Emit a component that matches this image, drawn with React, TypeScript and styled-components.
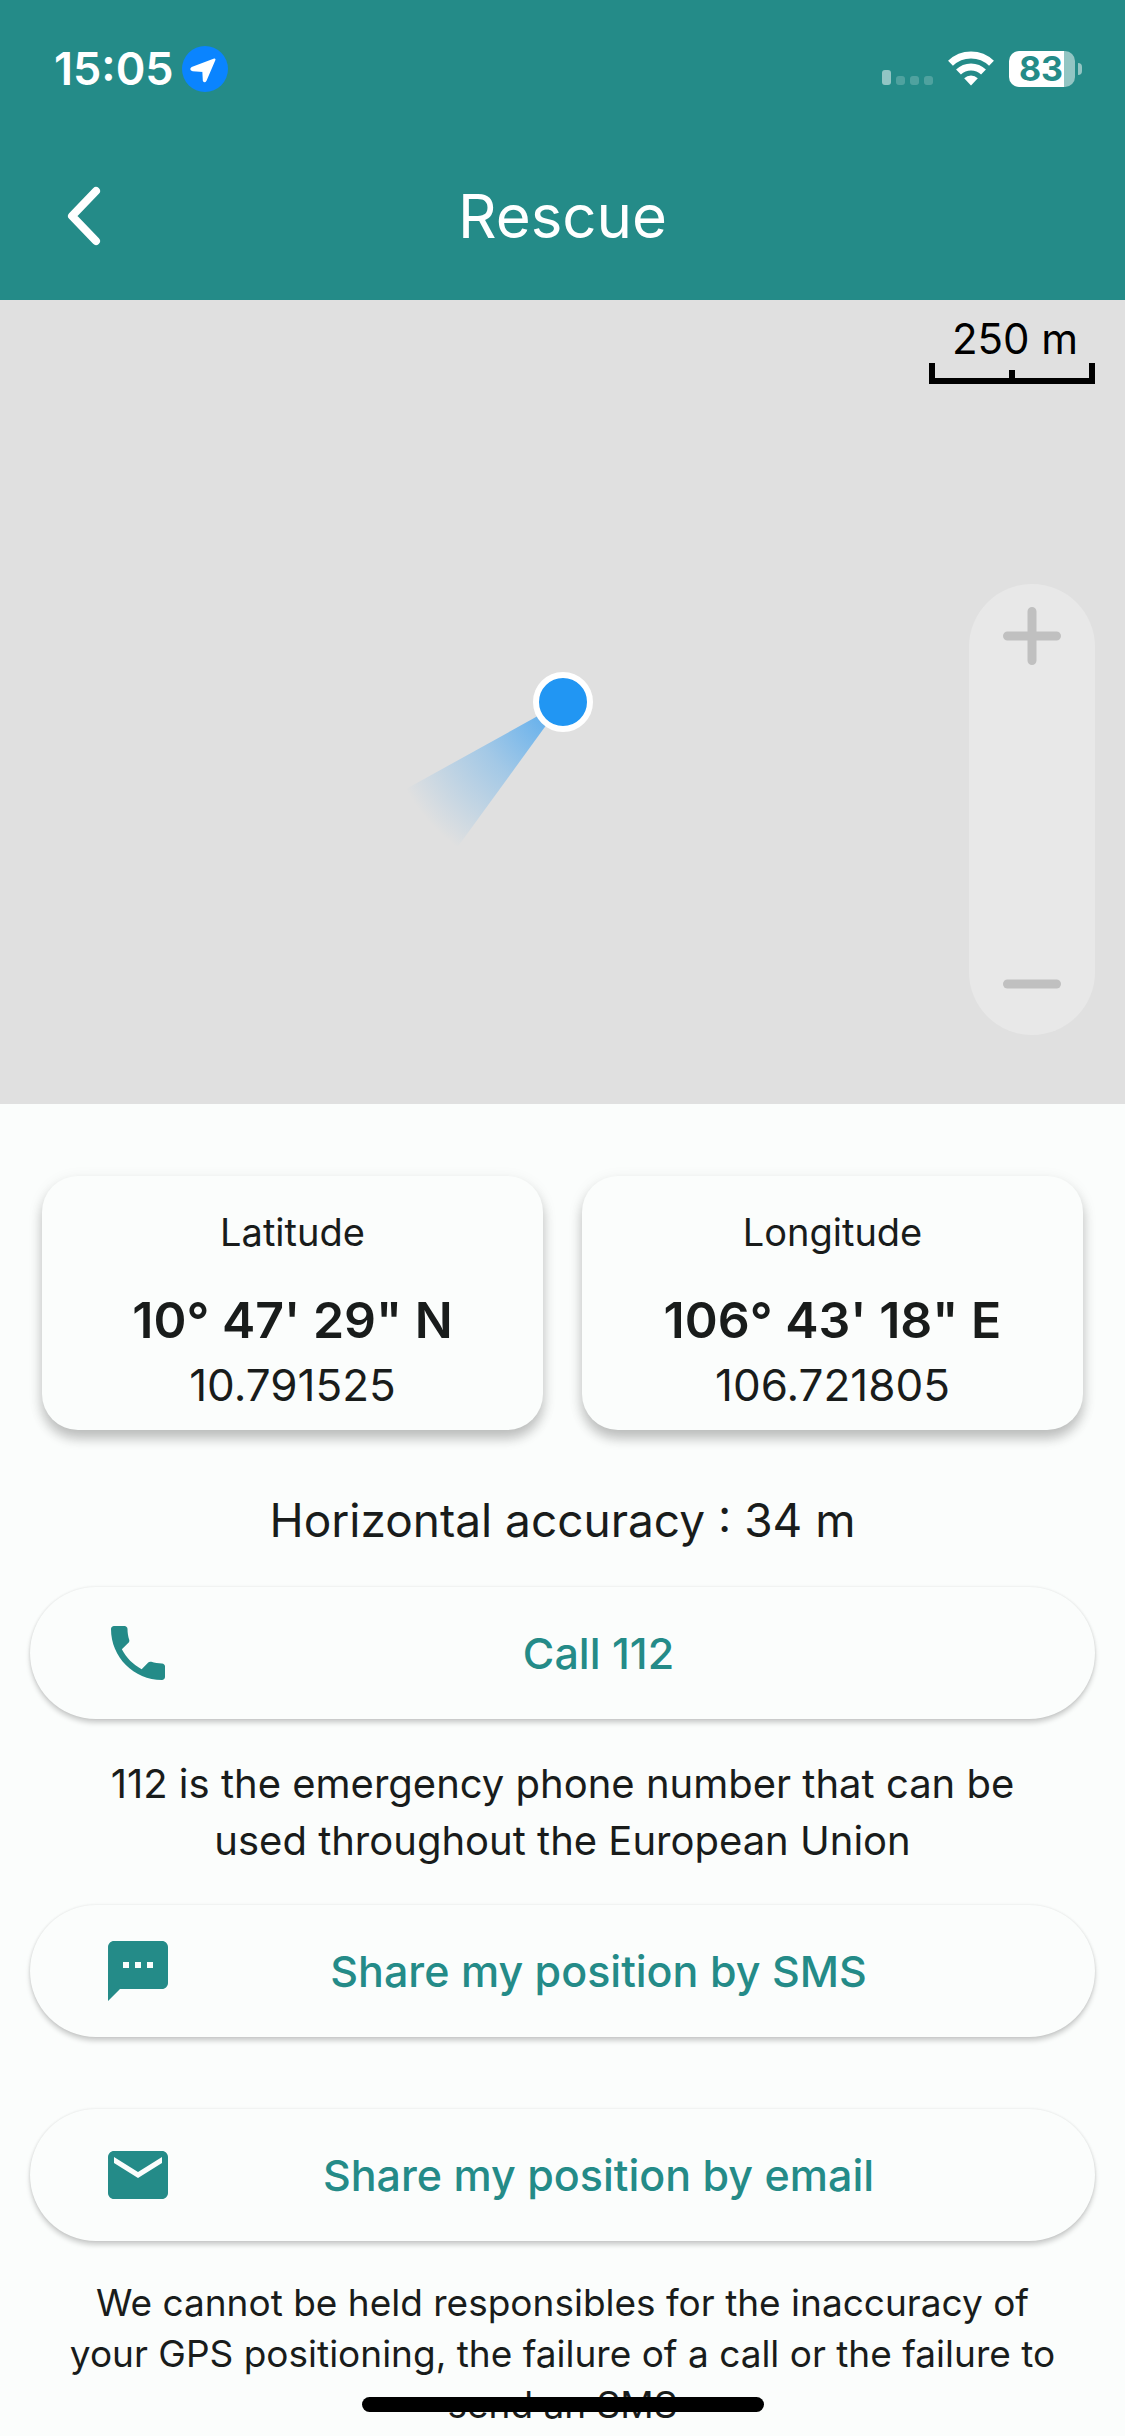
import React from "react";
import styled, { createGlobalStyle } from "styled-components";
import { MdEmail, MdPhone, MdSms } from "react-icons/md";

const teal = "#248b88";
const surface = "#fbfdfc";
const ink = "#191c1b";

const GlobalStyle = createGlobalStyle`
  * { box-sizing: border-box; }
  body {
    margin: 0;
    background: ${surface};
    color: ${ink};
    font-family: Inter, Roboto, "Liberation Sans", sans-serif;
  }
  button { font: inherit; border: 0; cursor: pointer; }
  h1, h2, p { margin: 0; font-weight: 400; }
`;

const Page = styled.div`
  display: flex;
  flex-direction: column;
  min-height: 100vh;
`;

const Header = styled.header`
  background: ${teal};
  color: #fff;
`;

const StatusBar = styled.div`
  display: flex;
  align-items: center;
  justify-content: space-between;
  height: 138px;
  padding: 0 43px 0 54px;
`;

const StatusGroup = styled.div`
  display: flex;
  align-items: center;
  gap: 8px;
`;

const Clock = styled.time`
  font-size: 45px;
  line-height: 60px;
  font-weight: 600;
`;

const Indicators = styled.div`
  display: flex;
  align-items: center;
  gap: 15px;
`;

const Battery = styled.div`
  display: flex;
  align-items: center;
  gap: 3px;
`;

const BatteryBody = styled.div`
  width: 66px;
  height: 36px;
  padding-right: 2px;
  border-radius: 10px;
  background: linear-gradient(to right, #fff 83%, #92c5c3 83%);
  color: ${teal};
  font-size: 34px;
  line-height: 36px;
  font-weight: 700;
  text-align: center;
`;

const BatteryTip = styled.div`
  width: 4px;
  height: 12px;
  border-radius: 0 6px 6px 0;
  background: #92c5c3;
`;

const NavBar = styled.div`
  display: grid;
  grid-template-columns: 168px 1fr 168px;
  align-items: center;
  height: 162px;
  padding-bottom: 6px;
`;

const BackButton = styled.button`
  display: grid;
  place-items: center;
  height: 120px;
  padding: 0;
  background: none;
  color: #fff;
`;

const Title = styled.h1`
  font-size: 60px;
  line-height: 72px;
  text-align: center;
`;

const MapView = styled.section`
  display: flex;
  flex-direction: column;
  align-items: flex-end;
  position: relative;
  height: 804px;
  padding: 15px 30px 0;
  background: #e0e0e0;
  overflow: hidden;
`;

const Scale = styled.div`
  display: flex;
  flex-direction: column;
  align-items: center;
  width: 166px;
  color: #000;
`;

const ScaleLabel = styled.span`
  padding-left: 6px;
  font-size: 42px;
  line-height: 48px;
`;

const Marker = styled.svg`
  position: absolute;
  top: 50%;
  left: 50%;
  transform: translate(-50%, -50%);
`;

const ZoomControl = styled.div`
  display: flex;
  flex-direction: column;
  justify-content: space-between;
  width: 126px;
  height: 451px;
  margin-top: 200px;
  border-radius: 63px;
  background: #e8e8e8;
`;

const ZoomButton = styled.button`
  display: grid;
  place-items: center;
  height: 103px;
  padding: 0;
  background: none;
  color: #c0c0c0;
`;

const Content = styled.main`
  display: flex;
  flex-direction: column;
  padding: 72px 30px 0;
`;

const Cards = styled.div`
  display: grid;
  grid-template-columns: 1fr 1fr;
  gap: 39px;
  padding: 0 12px;
`;

const Card = styled.section`
  display: flex;
  flex-direction: column;
  align-items: center;
  padding: 26px 0 16px;
  border-radius: 36px;
  background: ${surface};
  box-shadow: 0 9px 12px rgba(0, 0, 0, 0.2), 0 4px 16px rgba(0, 0, 0, 0.09);
`;

const CardLabel = styled.h2`
  font-size: 38px;
  line-height: 60px;
`;

const Coordinate = styled.p`
  margin-top: 22px;
  font-size: 50px;
  line-height: 72px;
  font-weight: 600;
`;

const Decimal = styled.p`
  font-size: 44px;
  line-height: 58px;
`;

const Accuracy = styled.p`
  margin: 60px 0 37px;
  font-size: 46px;
  line-height: 60px;
  text-align: center;
`;

const ActionButton = styled.button`
  display: flex;
  align-items: center;
  height: 132px;
  padding: 0 72px;
  border-radius: 66px;
  background: ${surface};
  color: ${teal};
  box-shadow: 0 4px 5px rgba(0, 0, 0, 0.18), 0 0 3px rgba(0, 0, 0, 0.1);
`;

const ActionLabel = styled.span`
  flex: 1;
  font-size: 43px;
  line-height: 60px;
  font-weight: 500;
  text-align: center;
`;

const Actions = styled.div`
  display: flex;
  flex-direction: column;
  gap: 72px;
`;

const Hint = styled.p`
  margin: 36px 60px;
  font-size: 40px;
  line-height: 57px;
  text-align: center;
`;

const Disclaimer = styled.p`
  margin: 36px 30px 0;
  font-size: 37px;
  line-height: 51px;
  text-align: center;
`;

const HomeIndicator = styled.div`
  position: fixed;
  bottom: 24px;
  left: 50%;
  width: 402px;
  height: 15px;
  border-radius: 8px;
  background: #000;
  transform: translateX(-50%);
`;

const LocationIcon = () => (
  <svg width="46" height="46" viewBox="0 0 46 46" aria-hidden="true">
    <circle cx="23" cy="23" r="23" fill="#0a84ff" />
    <path
      d="M32.5 13.5 23.5 34.5Q22.6 36 21.8 34.5L21.3 25 10.6 24.2Q8.4 23.2 10 22Z"
      fill="#fff"
      stroke="#fff"
      strokeWidth="2"
      strokeLinejoin="round"
    />
  </svg>
);

const SignalIcon = () => (
  <svg width="51" height="36" viewBox="0 0 51 36" fill="#fff" aria-hidden="true">
    <rect x="0" y="19" width="9" height="15" rx="3" opacity="0.5" />
    <rect x="14" y="25" width="9" height="9" rx="3" opacity="0.2" />
    <rect x="28" y="25" width="9" height="9" rx="3" opacity="0.2" />
    <rect x="42" y="25" width="9" height="9" rx="3" opacity="0.2" />
  </svg>
);

const WifiIcon = () => (
  <svg width="46" height="36" viewBox="0 0 46 36" aria-hidden="true">
    <g fill="none" stroke="#fff" strokeWidth="7">
      <path d="M2.5 12.2A29.5 29.5 0 0 1 43.5 12.2" />
      <path d="M10.5 21A18 18 0 0 1 35.5 21" />
    </g>
    <path d="M16.2 27.2A9.8 9.8 0 0 1 29.8 27.2L23 34.5Z" fill="#fff" />
  </svg>
);

const ChevronIcon = () => (
  <svg width="36" height="60" viewBox="0 0 36 60" aria-hidden="true">
    <path
      d="M30 5 6 30 30 55"
      fill="none"
      stroke="#fff"
      strokeWidth="8"
      strokeLinecap="round"
      strokeLinejoin="round"
    />
  </svg>
);

const ScaleRuler = () => (
  <svg width="166" height="21" viewBox="0 0 166 21" aria-hidden="true">
    <path d="M3 0V18H163V0M83 7V18" fill="none" stroke="#000" strokeWidth="6" />
  </svg>
);

const ZoomGlyph = ({ plus = false }: { plus?: boolean }) => (
  <svg width="58" height="58" viewBox="0 0 58 58" aria-hidden="true">
    <path
      d={plus ? "M4.5 29H53.5M29 4.5V53.5" : "M4.5 29H53.5"}
      fill="none"
      stroke="currentColor"
      strokeWidth="9"
      strokeLinecap="round"
    />
  </svg>
);

const positions = [
  { label: "Latitude", dms: `10° 47' 29" N`, decimal: "10.791525" },
  { label: "Longitude", dms: `106° 43' 18" E`, decimal: "106.721805" },
];

export default function App() {
  return (
    <>
      <GlobalStyle />
      <Page>
        <Header>
          <StatusBar>
            <StatusGroup>
              <Clock>15:05</Clock>
              <LocationIcon />
            </StatusGroup>
            <Indicators>
              <SignalIcon />
              <WifiIcon />
              <Battery>
                <BatteryBody>83</BatteryBody>
                <BatteryTip />
              </Battery>
            </Indicators>
          </StatusBar>
          <NavBar>
            <BackButton aria-label="Back">
              <ChevronIcon />
            </BackButton>
            <Title>Rescue</Title>
          </NavBar>
        </Header>

        <MapView aria-label="Map">
          <Scale>
            <ScaleLabel>250 m</ScaleLabel>
            <ScaleRuler />
          </Scale>
          <Marker width="360" height="360" viewBox="-180 -180 360 360" aria-hidden="true">
            <defs>
              <radialGradient id="heading" gradientUnits="userSpaceOnUse" cx="0" cy="0" r="180">
                <stop offset="0" stopColor="#2196f3" stopOpacity="0.75" />
                <stop offset="0.5" stopColor="#2196f3" stopOpacity="0.32" />
                <stop offset="1" stopColor="#2196f3" stopOpacity="0" />
              </radialGradient>
            </defs>
            <path d="M0 0-157.4 87.3A180 180 0 0 0-105.8 145.6Z" fill="url(#heading)" />
            <circle r="27" fill="#2196f3" stroke="#fff" strokeWidth="6" />
          </Marker>
          <ZoomControl>
            <ZoomButton aria-label="Zoom in">
              <ZoomGlyph plus />
            </ZoomButton>
            <ZoomButton aria-label="Zoom out">
              <ZoomGlyph />
            </ZoomButton>
          </ZoomControl>
        </MapView>

        <Content>
          <Cards>
            {positions.map((p) => (
              <Card key={p.label}>
                <CardLabel>{p.label}</CardLabel>
                <Coordinate>{p.dms}</Coordinate>
                <Decimal>{p.decimal}</Decimal>
              </Card>
            ))}
          </Cards>
          <Accuracy>Horizontal accuracy : 34 m</Accuracy>
          <ActionButton>
            <MdPhone size={72} aria-hidden="true" />
            <ActionLabel>Call 112</ActionLabel>
          </ActionButton>
          <Hint>112 is the emergency phone number that can be used throughout the European Union</Hint>
          <Actions>
            <ActionButton>
              <MdSms size={72} aria-hidden="true" />
              <ActionLabel>Share my position by SMS</ActionLabel>
            </ActionButton>
            <ActionButton>
              <MdEmail size={72} aria-hidden="true" />
              <ActionLabel>Share my position by email</ActionLabel>
            </ActionButton>
          </Actions>
          <Disclaimer>
            We cannot be held responsibles for the inaccuracy of your GPS positioning, the failure of a call or the
            failure to send an SMS
          </Disclaimer>
        </Content>
        <HomeIndicator />
      </Page>
    </>
  );
}
